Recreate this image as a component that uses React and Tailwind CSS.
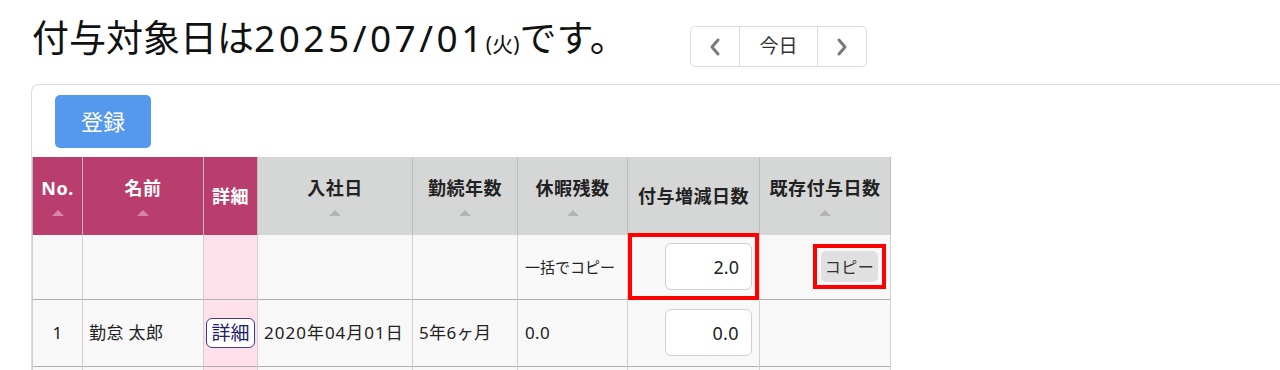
import React from "react";

const font = { fontFamily: '"Noto Sans", "Noto Sans CJK JP", sans-serif' };

function SortMark({ pink }) {
  return (
    <span
      className={
        "mt-[10px] block h-0 w-0 border-x-[6px] border-b-[6px] border-x-transparent " +
        (pink ? "border-b-[#d985a6]" : "border-b-[#b4b4b4]")
      }
    />
  );
}

function HeadCell({ label, pink, sort = true }) {
  return (
    <th
      className={
        "h-[78px] border-x border-[#bdbdbd] p-0 text-[18px] font-bold tracking-[0.5px] " +
        (pink ? "bg-[#b93e6e] text-white" : "bg-[#d5d6d6] text-[#222]")
      }
    >
      <div className="flex flex-col items-center justify-center">
        <span className="leading-[24px]">{label}</span>
        {sort && <SortMark pink={pink} />}
      </div>
    </th>
  );
}

export default function App() {
  const cols = [50, 121, 54, 155, 105, 110, 132, 131];

  return (
    <div className="h-[370px] w-[1280px] overflow-hidden bg-white text-[#222]" style={font}>
      {/* title + day nav */}
      <div className="flex h-[84px] items-start pl-[32px]">
        <h1 className="mt-[14px] flex w-[658px] shrink-0 items-baseline text-[37px] leading-[48px] font-normal text-[#111]">
          付与対象日は
          <span className="tracking-[3.5px]">2025/07/01</span>
          <span className="text-[21px]">(火)</span>
          です。
        </h1>
        <div className="mt-[26px] flex h-[41px] items-stretch rounded-[5px] border border-[#dcdcdc] text-[19px] text-[#333]">
          <button className="flex w-[49px] items-center justify-center border-r border-[#dcdcdc] text-[#7a7a7a]">
            <svg width="14" height="20" viewBox="0 0 14 20" fill="none" stroke="currentColor" strokeWidth="3" strokeLinecap="round" strokeLinejoin="round">
              <path d="M10 3 L4 10 L10 17" />
            </svg>
          </button>
          <button className="flex w-[77px] items-center justify-center">今日</button>
          <button className="flex w-[49px] items-center justify-center border-l border-[#dcdcdc] text-[#7a7a7a]">
            <svg width="14" height="20" viewBox="0 0 14 20" fill="none" stroke="currentColor" strokeWidth="3" strokeLinecap="round" strokeLinejoin="round">
              <path d="M4 3 L10 10 L4 17" />
            </svg>
          </button>
        </div>
      </div>

      {/* panel */}
      <div className="ml-[31px] rounded-tl-[8px] border-l border-t border-[#dcdcdc]">
        <div className="px-[23px] pt-[10px] pb-[9px]">
          <button className="h-[53px] w-[96px] rounded-[5px] bg-[#5599ee] text-[22px] text-white">
            登録
          </button>
        </div>

        <table className="table-fixed border-collapse text-[16px]">
          <colgroup>
            {cols.map((w, i) => (
              <col key={i} style={{ width: w }} />
            ))}
          </colgroup>
          <thead>
            <tr>
              <HeadCell label="No." pink />
              <HeadCell label="名前" pink />
              <HeadCell label="詳細" pink sort={false} />
              <HeadCell label="入社日" />
              <HeadCell label="勤続年数" />
              <HeadCell label="休暇残数" />
              <HeadCell label="付与増減日数" sort={false} />
              <HeadCell label="既存付与日数" />
            </tr>
          </thead>
          <tbody>
            <tr className="h-[64px] border-b border-[#b0b0b0] bg-[#f8f8f8]">
              <td className="border-x border-[#d0d0d0]" />
              <td className="border-x border-[#d0d0d0]" />
              <td className="border-x border-[#d0d0d0] bg-[#fde0ea]" />
              <td className="border-x border-[#d0d0d0]" />
              <td className="border-x border-[#d0d0d0]" />
              <td className="border-x border-[#d0d0d0] px-[7px] text-[15px]">一括でコピー</td>
              <td className="relative border-x border-[#d0d0d0] p-0">
                <div className="flex justify-end pr-[7px]">
                  <input
                    readOnly
                    value="2.0"
                    className="h-[47px] w-[87px] rounded-[6px] border border-[#cfcfcf] bg-white pr-[12px] text-right text-[18px] text-[#222] outline-none"
                  />
                </div>
                <div className="absolute inset-x-0 -top-[2px] -bottom-[1px] border-4 border-[#ff0000]" />
              </td>
              <td className="border-x border-[#d0d0d0] p-0">
                <div className="flex justify-end pr-[4px]">
                  <div className="border-4 border-[#ff0000] px-[4px] py-[3px]">
                    <button className="h-[31px] w-[57px] rounded-[5px] bg-[#e0e0e0] text-[16px] tracking-[0.5px] text-[#333]">
                      コピー
                    </button>
                  </div>
                </div>
              </td>
            </tr>
            <tr className="h-[67px] border-b border-[#b0b0b0] bg-[#f8f8f8] text-[17px] tracking-[0.4px]">
              <td className="border-x border-[#d0d0d0] text-center">1</td>
              <td className="border-x border-[#d0d0d0] px-[6px]">勤怠 太郎</td>
              <td className="border-x border-[#d0d0d0] bg-[#fde0ea] p-0 text-center">
                <span className="inline-block rounded-[6px] border border-[#3c3c8a] bg-white px-[4px] text-[19px] leading-[28px] tracking-normal text-[#1c1c6a]">
                  詳細
                </span>
              </td>
              <td className="border-x border-[#d0d0d0] px-[6px] tracking-[1px]">2020年04月01日</td>
              <td className="border-x border-[#d0d0d0] px-[6px]">5年6ヶ月</td>
              <td className="border-x border-[#d0d0d0] px-[7px]">0.0</td>
              <td className="border-x border-[#d0d0d0] p-0">
                <div className="flex justify-end pr-[7px]">
                  <input
                    readOnly
                    value="0.0"
                    className="h-[47px] w-[87px] rounded-[6px] border border-[#cfcfcf] bg-white pr-[12px] text-right text-[18px] text-[#222] outline-none"
                  />
                </div>
              </td>
              <td className="border-x border-[#d0d0d0]" />
            </tr>
            <tr className="h-[40px] bg-[#f8f8f8]">
              <td className="border-x border-[#d0d0d0]" />
              <td className="border-x border-[#d0d0d0]" />
              <td className="border-x border-[#d0d0d0] bg-[#fde0ea]" />
              <td className="border-x border-[#d0d0d0]" />
              <td className="border-x border-[#d0d0d0]" />
              <td className="border-x border-[#d0d0d0]" />
              <td className="border-x border-[#d0d0d0]" />
              <td className="border-x border-[#d0d0d0]" />
            </tr>
          </tbody>
        </table>
      </div>
    </div>
  );
}
